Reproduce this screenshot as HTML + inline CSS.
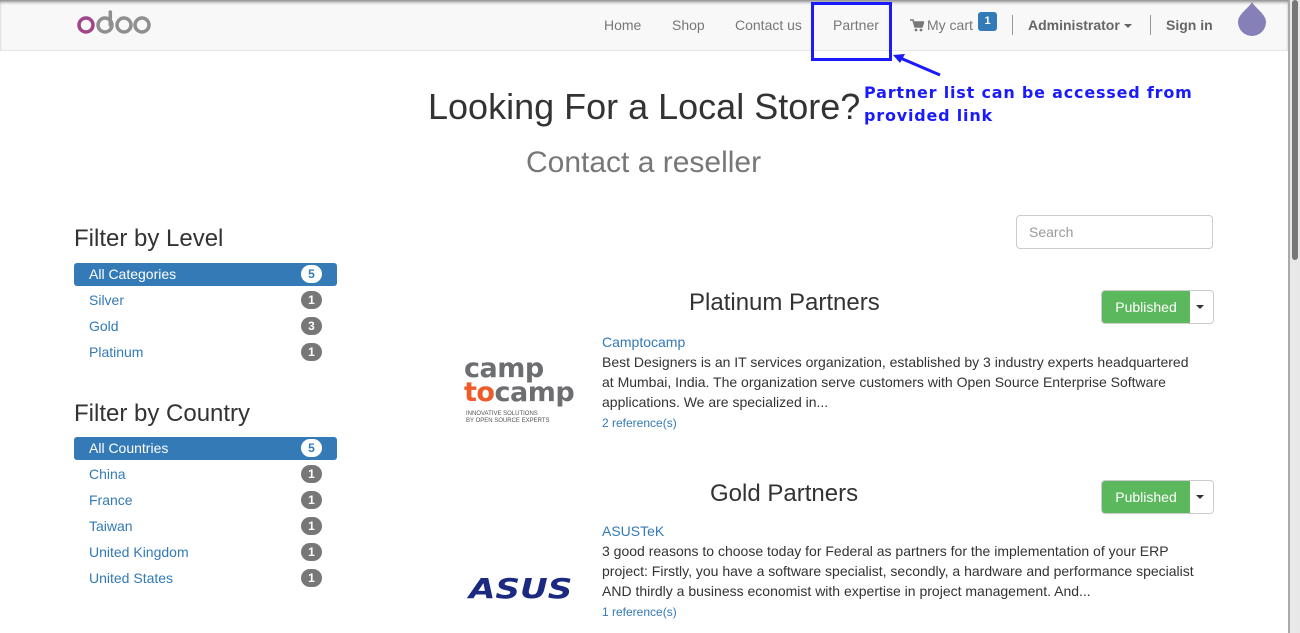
<!DOCTYPE html>
<html><head><meta charset="utf-8"><style>
*{box-sizing:border-box;margin:0;padding:0}
body{width:1300px;height:633px;overflow:hidden;background:#fff;font-family:"Liberation Sans",sans-serif;color:#333;position:relative;font-size:14px}
.a{position:absolute;white-space:nowrap}
.nav{position:absolute;left:0;top:0;width:1288px;height:51px;background:#f8f8f8;border-bottom:1px solid #e7e7e7;box-shadow:inset 0 3px 3px -1px #888}
.nl{color:#777;font-size:14px;top:17px}
.badge{display:inline-block;border-radius:10px;background:#777;color:#fff;font-size:12px;font-weight:bold;width:21px;height:18px;text-align:center;line-height:18px}
.li{position:absolute;left:74px;width:263px;height:23px;color:#337ab7;font-size:14px;line-height:23px;padding-left:15px;border-radius:3px}
.li .badge{position:absolute;right:15px;top:2px}
.li.act{background:#337ab7;color:#fff}
.li.act .badge{background:#fff;color:#337ab7}
.pub{position:absolute;width:113px;height:34px;border:1px solid #ccc;border-radius:4px;overflow:hidden}
.pub span{position:absolute;left:0;top:0;width:88px;height:34px;background:#5cb85c;color:#fff;line-height:32px;text-align:center;font-size:14px}
.pub i{position:absolute;right:9px;top:14px;border-left:4px solid transparent;border-right:4px solid transparent;border-top:4px solid #333}
.desc{font-size:14px;line-height:20px;color:#333;white-space:normal;width:598px}
.ann{color:#1a1aff;font-family:"DejaVu Sans",sans-serif;font-size:16px;letter-spacing:0.8px;line-height:23px;font-weight:bold}
</style></head><body>
<div class="nav"></div>
<svg class="a" style="left:76px;top:10px" width="80" height="28">
<circle cx="10" cy="15" r="7" fill="none" stroke="#a24689" stroke-width="3.5"/>
<circle cx="29" cy="15" r="7" fill="none" stroke="#8f8f8f" stroke-width="3.5"/>
<line x1="34.3" y1="2" x2="34.3" y2="15" stroke="#8f8f8f" stroke-width="3.5" stroke-linecap="round"/>
<circle cx="48" cy="15" r="7" fill="none" stroke="#8f8f8f" stroke-width="3.5"/>
<circle cx="66" cy="15" r="7" fill="none" stroke="#8f8f8f" stroke-width="3.5"/>
</svg>
<div class="a nl" style="left:604px">Home</div>
<div class="a nl" style="left:672px">Shop</div>
<div class="a nl" style="left:735px">Contact us</div>
<div class="a nl" style="left:833px">Partner</div>
<svg class="a" style="left:910px;top:19px" width="14" height="13"><path d="M0 1 H3 L5 8 H12 L13.5 3 H4" fill="none" stroke="#777" stroke-width="1.6"/><path d="M4 3 H13.5 L12 8 H5Z" fill="#777"/><circle cx="6" cy="11" r="1.4" fill="#777"/><circle cx="11" cy="11" r="1.4" fill="#777"/></svg>
<div class="a nl" style="left:927px">My cart</div>
<div class="a" style="left:978px;top:12px;width:19px;height:19px;background:#337ab7;border-radius:3px;color:#fff;font-size:11px;font-weight:bold;text-align:center;line-height:18px">1</div>
<div class="a" style="left:1012px;top:15px;width:1px;height:20px;background:#999"></div>
<div class="a nl" style="left:1028px;font-weight:bold;color:#666">Administrator <span style="display:inline-block;border-left:4px solid transparent;border-right:4px solid transparent;border-top:4px solid #666;vertical-align:middle"></span></div>
<div class="a" style="left:1150px;top:15px;width:1px;height:20px;background:#999"></div>
<div class="a nl" style="left:1166px;font-weight:bold;color:#666">Sign in</div>
<svg class="a" style="left:1237px;top:1px" width="30" height="36"><path d="M15 1 C18 7 29 13 29 21 A14 14 0 0 1 1 21 C1 13 12 7 15 1Z" fill="#8580b8"/></svg>
<div class="a" style="left:1288px;top:0;width:2px;height:633px;background:#aaa"></div>
<div class="a" style="left:1290px;top:0;width:10px;height:633px;background:#e8e8e8"></div>
<div class="a" style="left:1292px;top:0;width:6px;height:260px;background:#777;border-radius:3px"></div>
<div class="a" style="left:811px;top:2px;width:81px;height:59px;border:3px solid #1a1aff"></div>
<svg class="a" style="left:890px;top:50px" width="60" height="30"><line x1="50" y1="25" x2="8" y2="7" stroke="#1a1aff" stroke-width="3"/><path d="M3 5 L15 4 L10 13Z" fill="#1a1aff"/></svg>
<div class="a ann" style="left:864px;top:81px">Partner list can be accessed from<br>provided link</div>
<div class="a" style="left:428px;top:86px;font-size:36px;color:#333">Looking For a Local Store?</div>
<div class="a" style="left:526px;top:146px;font-size:30px;color:#777">Contact a reseller</div>
<div class="a" style="left:74px;top:225px;font-size:24px">Filter by Level</div>
<div class="li act" style="top:263px">All Categories<span class="badge">5</span></div>
<div class="li" style="top:289px">Silver<span class="badge">1</span></div>
<div class="li" style="top:315px">Gold<span class="badge">3</span></div>
<div class="li" style="top:341px">Platinum<span class="badge">1</span></div>
<div class="a" style="left:74px;top:400px;font-size:24px">Filter by Country</div>
<div class="li act" style="top:437px">All Countries<span class="badge">5</span></div>
<div class="li" style="top:463px">China<span class="badge">1</span></div>
<div class="li" style="top:489px">France<span class="badge">1</span></div>
<div class="li" style="top:515px">Taiwan<span class="badge">1</span></div>
<div class="li" style="top:541px">United Kingdom<span class="badge">1</span></div>
<div class="li" style="top:567px">United States<span class="badge">1</span></div>
<div class="a" style="left:1016px;top:215px;width:197px;height:34px;border:1px solid #ccc;border-radius:4px;color:#999;padding:8px 12px;font-size:14px">Search</div>
<div class="a" style="left:689px;top:289px;font-size:24px">Platinum Partners</div>
<div class="pub" style="left:1101px;top:290px"><span>Published</span><i></i></div>
<div class="a" style="left:464px;top:357px;font-family:'DejaVu Sans',sans-serif;font-weight:bold;line-height:24px;font-size:27px;letter-spacing:-0.5px;color:#6d6e71">camp<br><span style="color:#f05a28">to</span>camp</div>
<div class="a" style="left:466px;top:411px;font-size:6px;line-height:7px;color:#555">INNOVATIVE SOLUTIONS<br>BY OPEN SOURCE EXPERTS</div>
<div class="a" style="left:602px;top:334px;color:#337ab7">Camptocamp</div>
<div class="a desc" style="left:602px;top:352px">Best Designers is an IT services organization, established by 3 industry experts headquartered at Mumbai, India. The organization serve customers with Open Source Enterprise Software applications. We are specialized in...</div>
<div class="a" style="left:602px;top:416px;font-size:12px;color:#337ab7">2 reference(s)</div>
<div class="a" style="left:710px;top:480px;font-size:24px">Gold Partners</div>
<div class="pub" style="left:1101px;top:480px"><span>Published</span><i></i></div>
<div class="a" style="left:469px;top:574px;font-family:'DejaVu Sans',sans-serif;font-weight:bold;font-style:italic;font-size:28px;line-height:30px;color:#1b2a80;transform:scaleX(1.22);transform-origin:left">ASUS</div>
<div class="a" style="left:602px;top:523px;color:#337ab7">ASUSTeK</div>
<div class="a desc" style="left:602px;top:541px">3 good reasons to choose today for Federal as partners for the implementation of your ERP project: Firstly, you have a software specialist, secondly, a hardware and performance specialist AND thirdly a business economist with expertise in project management. And...</div>
<div class="a" style="left:602px;top:605px;font-size:12px;color:#337ab7">1 reference(s)</div>
</body></html>
